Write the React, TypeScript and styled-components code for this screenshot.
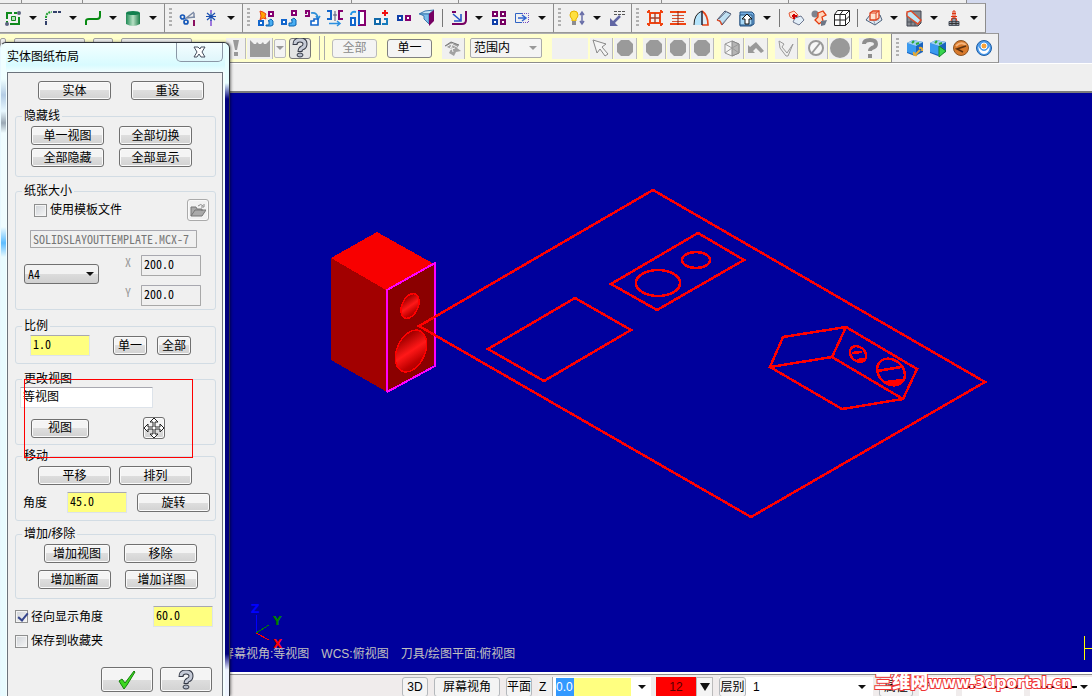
import * as React from 'react'
import styled, { createGlobalStyle, css } from 'styled-components'

const GlobalStyle = createGlobalStyle`
    * {
        box-sizing: border-box;
    }
    body {
        margin: 0;
        overflow: hidden;
        background: #f0f0f0;
    }
    body, button, input, select {
        font-family: 'Liberation Sans', 'Noto Sans CJK SC', sans-serif;
        font-size: 12px;
        line-height: 14px;
        color: #000;
    }
`

const glyphs = {
    grid: (
        <>
            <path d="M7 3H2v6M5 14h9V7" fill="none" stroke="#0f8a1c" strokeWidth="2" />
            <path d="M6.5 6.5h4v4h-4z" fill="#b7e0b7" stroke="#0f8a1c" />
            <path d="M9 3h3M2 11v2" stroke="#0f8a1c" strokeWidth="2" />
            <circle cx="14" cy="3" r="2" fill="#5c6480" />
            <circle cx="2" cy="14" r="2" fill="#5c6480" />
        </>
    ),
    fillet: (
        <>
            <path d="M1 15V9M8 2h8" stroke="#33416b" strokeWidth="2" strokeDasharray="4 1" />
            <path d="M1 8q0-6 6-6" fill="none" stroke="#20a030" strokeWidth="2" strokeDasharray="2 1" />
        </>
    ),
    spline: <path d="M1 15v-4q0-2 3-2h8q3 0 3-3V1" fill="none" stroke="#078a12" strokeWidth="2" />,
    cylinder: (
        <>
            <path d="M1 3v11q7 4 14 0V3z" fill="url(#cyl)" />
            <ellipse cx="8" cy="3" rx="7" ry="2" fill="#13804f" />
        </>
    ),
    trim: (
        <>
            <path d="M5 9l9-7M6 8l9-1" fill="none" stroke="#7a89a4" strokeWidth="1.5" />
            <path d="M14 3v5" stroke="#7a89a4" strokeWidth="1.5" />
            <path d="M14 10v6" stroke="#8a1060" strokeWidth="2" />
            <circle cx="2.5" cy="7" r="2" fill="none" stroke="#1457b8" strokeWidth="1.7" />
            <circle cx="6" cy="12" r="2" fill="none" stroke="#1457b8" strokeWidth="1.7" />
        </>
    ),
    breakPoint: (
        <>
            <path d="M8 0v3M8 10v6" stroke="#8a5ad8" strokeWidth="1.6" />
            <path d="M4 3l8 7M12 3l-8 7M3 6.5h10M8 3v8" stroke="#1c50b0" strokeWidth="1.2" />
        </>
    ),
    moveCopy: (
        <>
            <path d="M11 2h4v4h-4z" fill="#fff" stroke="#850070" strokeWidth="2" />
            <path d="M1 11h4v4H1z" fill="#fff" stroke="#1266cc" strokeWidth="2" />
            <path d="M2 1l3 1 3 2-1 2 1 3-3-1-3 2 1-4z" fill="#ffa500" stroke="#ee4010" />
            <path d="M8 15h3v-4h-1l3-2 2 2v4l-2 1H8z" fill="#49aef2" stroke="#0b62b0" />
        </>
    ),
    move: (
        <>
            <path d="M11 1h4v4h-4z" fill="#fff" stroke="#850070" strokeWidth="2" />
            <path d="M1 10h4v4H1z" fill="#fff" stroke="#1266cc" strokeWidth="2" />
            <path d="M8 13h3v-3h-1l3-2 2 2v5l-2 1H8z" fill="#49aef2" stroke="#0b62b0" />
        </>
    ),
    rotate: (
        <>
            <path d="M1 1h4v5H1M1 3h2" fill="none" stroke="#850070" strokeWidth="2" />
            <path d="M7 3q6-1 7 5M12 6l2 3 2-3" fill="none" stroke="#2d8fd8" strokeWidth="1.6" />
            <path d="M7 15v-4h3v-2h4v6z" fill="#fff" stroke="#1266cc" strokeWidth="1.6" />
        </>
    ),
    mirror: (
        <>
            <path d="M0 1h4v8H0" fill="none" stroke="#1266cc" strokeWidth="2" />
            <path d="M16 1h-4v8h4" fill="none" stroke="#850070" strokeWidth="2" />
            <path d="M8 1v10M6 5h4" stroke="#557" />
            <path d="M2 13.5h10M10 11l3 2.5-3 2.5" fill="none" stroke="#2b8fe0" strokeWidth="1.5" />
        </>
    ),
    scale: (
        <>
            <path d="M1 8h4v7H1z" fill="#fff" stroke="#1266cc" strokeWidth="2" />
            <path d="M9 1h6v14H9z" fill="#fff" stroke="#850070" strokeWidth="2" />
            <path d="M9 1v14" stroke="#1266cc" strokeWidth="2" />
            <path d="M1 5q0-4 5-3" fill="none" stroke="#2496e8" strokeWidth="2" />
        </>
    ),
    translate: (
        <>
            <path d="M2 9h5v5H2z" fill="#fff" stroke="#126aaa" strokeWidth="2" />
            <path d="M9 14h5v-5h-3" fill="none" stroke="#167bbd" strokeWidth="2" />
            <path d="M12 0v6M9 3h6" stroke="#f01010" strokeWidth="2" />
        </>
    ),
    pair: (
        <>
            <path d="M2 6h4v4H2z" fill="#fff" stroke="#103fa8" strokeWidth="2" />
            <path d="M10 6h4v4h-4z" fill="#fff" stroke="#850070" strokeWidth="2" />
        </>
    ),
    project: (
        <>
            <path d="M0 4h10l5-4-9 1z" fill="#c5e2f6" stroke="#3978b0" />
            <path d="M1 4h9v10L5 9V6z" fill="#7cbcec" stroke="#3978b0" />
            <path d="M10 4l5-4v11l-5 5z" fill="#760062" />
        </>
    ),
    roll: (
        <>
            <path d="M1 2h4M1 14h10q4 0 4-4V1" fill="none" stroke="#760062" strokeWidth="2" />
            <path d="M2 4l7 6M10 4v7H3" fill="none" stroke="#2454c8" strokeWidth="1.6" />
        </>
    ),
    array: (
        <>
            <path d="M2 2h4v4H2zM10 2h4v4h-4z" fill="#fff" stroke="#760062" strokeWidth="2" />
            <path d="M2 10h4v4H2z" fill="#fff" stroke="#103fa8" strokeWidth="2" />
            <path d="M10 10h4v4h-4z" fill="#fff" stroke="#760062" strokeWidth="2" />
        </>
    ),
    stretch: (
        <>
            <path d="M8 3.5H1.5v9H8" fill="none" stroke="#2e63c4" />
            <path d="M8 3.5h6.5v9H8" fill="none" stroke="#704ac0" strokeDasharray="1 1" />
            <path d="M4 8h7M8 5l4 3-4 3" fill="none" stroke="#3264d0" strokeWidth="1.5" />
        </>
    ),
    bulb: (
        <>
            <path d="M1 5q0-4 4-4t4 4q0 2-2 4v2H3V9Q1 7 1 5z" fill="#ffe040" stroke="#e4b000" />
            <path d="M3 11h4v4H3z" fill="#8c8c90" />
            <path d="M13 2v12M11 5l2-3 2 3M11 11l2 3 2-3" fill="none" stroke="#6a6fa8" strokeWidth="1.5" />
        </>
    ),
    dimension: (
        <>
            <path d="M5 1.5h11M5 4.5h11" stroke="#555" strokeDasharray="3 1" />
            <path d="M11 6l-7 7" fill="none" stroke="#6166a4" strokeWidth="2.5" />
            <path d="M1 8v8h8z" fill="#6166a4" />
        </>
    ),
    netSurface: (
        <>
            <path d="M3 3h10v10H3zM0 2h3M13 2h3M0 14h3M13 14h3" fill="none" stroke="#f04412" strokeWidth="2" />
            <path d="M2 0v3M14 0v3M2 13v3M14 13v3" stroke="#f04412" strokeWidth="2" />
            <path d="M8 3v10M3 8h10" stroke="#a84028" strokeWidth="1.4" />
        </>
    ),
    ruled: (
        <>
            <path d="M0 2h16M0 14h16" stroke="#f04412" strokeWidth="2" />
            <path d="M2 5.5h12M2 8.5h12M2 11.5h12" stroke="#d85030" />
            <path d="M8 1v14" stroke="#8b2510" />
        </>
    ),
    revolve: (
        <>
            <path d="M1 15Q1 4 9 1v14z" fill="#b5e4fb" />
            <path d="M1 15Q1 4 9 1" fill="none" stroke="#222" />
            <path d="M9 1q6 4 6 14H9z" fill="#dfeef8" />
            <path d="M9 1q6 4 6 14H9" fill="none" stroke="#e84518" strokeWidth="1.7" />
            <path d="M9 1v14" stroke="#223" strokeWidth="1.5" />
        </>
    ),
    sweep: (
        <>
            <path d="M1 10l8-9 6 3-9 11-2-4z" fill="#bfe0f2" stroke="#3c4660" />
            <path d="M3 9l8-8M6 14l9-10" fill="none" stroke="#7d889c" />
            <path d="M1 10l3 1 2 4" fill="none" stroke="#e0502d" strokeWidth="1.5" />
        </>
    ),
    extrude: (
        <>
            <path d="M1 2h12l2 2v10l-3 2H1z" fill="#73acdf" stroke="#225080" />
            <path d="M1 5h12v10H1z" fill="#a8d8f6" stroke="#225080" />
            <path d="M6 14V9H3l5-5 5 5h-3v5z" fill="#fff" stroke="#111" />
        </>
    ),
    flower: (
        <>
            <path d="M1 3l5-2 4 4-2 5-6-3z" fill="#ffe3d0" stroke="#e35a38" />
            <path d="M7 8l6-2 3 4-5 5-6-3z" fill="#e2eef8" stroke="#6c768e" />
            <path d="M6 4v5M4 6h5" stroke="#d00000" strokeWidth="2" />
        </>
    ),
    surfaceTrim: (
        <>
            <circle cx="4" cy="4" r="3.5" fill="#7c838e" />
            <path d="M7 3l5-2 3 4-4 2 1 4-4 3-4-4 3-3z" fill="#ffd6bd" stroke="#e33c10" strokeWidth="1.3" />
            <path d="M10 11l6-1-2 5-4 1z" fill="#6c7686" />
        </>
    ),
    wireCube: (
        <path
            d="M.5 4.5h11v11H.5zM.5 4.5l3-4h12v11l-4 4M11.5 4.5l4-4M6 4.5v11M.5 10h11l4-4M9 .5l-3 4"
            fill="#fff"
            stroke="#222"
            strokeLinejoin="round"
        />
    ),
    planar: (
        <>
            <path d="M0 10l4-5h10l2 5-7 5z" fill="#dfe9f2" stroke="#4d617a" />
            <path d="M4 10h9M6 6l3 8" stroke="#8fa0b3" />
            <path d="M4 3l3-2h6v7l-3 2H4z" fill="#ffe1cf" stroke="#df401c" strokeWidth="1.3" />
            <path d="M4 3h6v7M10 3l3-2" fill="none" stroke="#df401c" />
        </>
    ),
    surfaceBox: (
        <>
            <path d="M1 3l3-2h11v12l-3 3H1z" fill="#85898f" stroke="#404550" />
            <path d="M1 12h11M5 8v8M9 8v8" stroke="#4c505a" />
            <path d="M1 2l4-1 10 9-3 4L1 6z" fill="#bfe6f5" stroke="#e04824" strokeWidth="1.4" />
        </>
    ),
    tower: (
        <>
            <path d="M3 11.5h10v4H3zM6 8.5h4v3H6z" fill="#939aa5" stroke="#4b525e" />
            <path d="M7 1h2v7H7zM6 3.5h4M5 6.5h6M6 8l-1 3M10 8l1 3" fill="none" stroke="#df3510" />
            <path d="M3 13.5h10M6 11v4M10 11v4" stroke="#333" />
        </>
    ),
    bang: <path d="M5 0h6l-1 5-1 5H7L6 5zM6 12h4v4H6z" fill="#999" />,
    envelope: (
        <path d="M-2 0l4 4h2l1-2 2 2h2l2-2 1 2h2l4-4v17H-2z" fill="#9b9b9b" />
    ),
    leaf: (
        <>
            <path d="M0 6l6-4 8 3-2 3 4 3-5 1-2 4-5-3 2-4z" fill="#a2a2a2" />
            <path d="M1 7l5-3 6 3M6 4l2 8M4 10l6-2M9 2l-5 8" fill="none" stroke="#f2f2f2" />
            <path d="M0 6l6-4 8 3" fill="none" stroke="#777" />
        </>
    ),
    pointer: <path d="M0 0l13 4-4 3 6 7-3 2-5-7-3 4z" fill="#f4f4f4" stroke="#888" />,
    hex: <path d="M4 0h8l4 4v8l-4 4H4l-4-4V4z" fill="#9a9a9a" />,
    isoCube: (
        <>
            <path d="M1 4l7-3 7 3v9l-7 3-7-3z" fill="#f4f4f4" stroke="#999" />
            <path d="M8 1l7 3v9l-7 3z" fill="#b4b4b4" stroke="#888" />
            <path d="M8 8l7-4M8 8l-7 5M8 8l7 5M8 8L1 4" fill="none" stroke="#999" />
        </>
    ),
    undo: <path d="M0 13V5l2 2 6-5 8 9-3 2-5-5-3 3 2 2z" fill="#999" />,
    check: <path d="M1 1l5 3-2 3 5 6 6-9-5 12H8L2 8z" fill="#eee" stroke="#999" />,
    noEntry: (
        <>
            <circle cx="8" cy="8" r="7" fill="#f7f7f7" stroke="#999" strokeWidth="2" />
            <path d="M4 13l8-10" stroke="#999" strokeWidth="2" />
        </>
    ),
    disc: <circle cx="8" cy="8" r="10" fill="#999" />,
    question: (
        <>
            <path d="M2 4q0-4 6-4t6 4q0 3-4 4-2 1-2 3" fill="none" stroke="#8e8e8e" strokeWidth="4" />
            <path d="M6 14h4v4H6z" fill="#8e8e8e" />
        </>
    ),
    machine: (
        <>
            <path d="M0 3l6-3 10 2v10l-8 4-8-3z" fill="#1a63bf" />
            <path d="M0 3l9 3v9l-9-3z" fill="#3a9af0" />
            <path d="M0 3l6-3 10 2-7 4z" fill="#9fd0f2" />
            <path d="M5 3l2-2M9 4l3-1" stroke="#28a838" strokeWidth="2" />
            <path d="M8 15l5-5M12 8q4-1 3 3M7 12q-1 4 3 3" fill="none" stroke="#e8ab35" strokeWidth="2" />
        </>
    ),
    play: (
        <>
            <path d="M0 3l6-3 10 2v10l-8 4-8-3z" fill="#1a63bf" />
            <path d="M0 3l9 3v9l-9-3z" fill="#3a9af0" />
            <path d="M0 3l6-3 10 2-7 4z" fill="#9fd0f2" />
            <path d="M5 3l2-2M9 4l3-1" stroke="#28a838" strokeWidth="2" />
            <path d="M9 6l7 5-7 6z" fill="#38d54e" stroke="#168628" />
        </>
    ),
    back: (
        <>
            <circle cx="8" cy="8" r="7.5" fill="#d87a2c" stroke="#8a5424" />
            <path d="M3 6q5-5 10-1" fill="none" stroke="#f5b47c" strokeWidth="2" />
            <path d="M13 6L4 9l6 3" fill="none" stroke="#5d3210" strokeWidth="1.6" />
        </>
    ),
    globe: (
        <>
            <circle cx="8" cy="8" r="7.5" fill="#4c9cec" stroke="#1d5ca4" />
            <path d="M2 6q6 10 12 0-1 8-6 8T2 6z" fill="#fff" />
            <circle cx="8" cy="6" r="3" fill="#f7a33a" stroke="#fff" />
        </>
    ),
}

type GlyphName = keyof typeof glyphs

// 'v' = drop-down arrow, '|' = separator
type Item = GlyphName | 'v' | '|'

const toolGroups: Item[][] = [
    ['grid', 'v', 'fillet', 'v', 'spline', 'v', 'cylinder', 'v'],
    ['trim', 'breakPoint', 'v'],
    [
        'moveCopy', 'move', 'rotate', 'mirror', 'scale', 'translate', 'pair', 'project', '|',
        'roll', 'v', 'array', 'stretch', 'v',
    ],
    ['bulb', 'v', 'dimension'],
    [
        'netSurface', 'ruled', 'revolve', 'sweep', 'extrude', 'v', '|',
        'flower', 'surfaceTrim', 'wireCube', '|',
        'planar', 'v', 'surfaceBox', 'v', 'tower', 'v',
    ],
]

const Glyph = ({ name }: { name: GlyphName }) => (
    <GlyphSvg viewBox="0 0 16 16" width="16" height="16" aria-hidden="true">
        {glyphs[name]}
    </GlyphSvg>
)

const Tool = ({ item }: { item: Item }) => {
    if (item === '|') return <Separator />
    if (item === 'v') {
        return (
            <ArrowButton aria-label="more">
                <Caret />
            </ArrowButton>
        )
    }
    return (
        <ToolButton aria-label={item}>
            <Glyph name={item} />
        </ToolButton>
    )
}

const HelpMark = () => (
    <svg width="18" height="20" viewBox="0 0 18 20" aria-hidden="true">
        <path d="M4 7q0-5 5-5t5 4q0 3-3 4-2 1-2 4" fill="none" stroke="#333845" strokeWidth="5" />
        <path d="M4 6q0-4 5-4t5 4q0 3-3 4-2 1-2 3" fill="none" stroke="#c5cad6" strokeWidth="3" />
        <ellipse cx="9" cy="17" rx="3" ry="2" fill="#b6bcc9" stroke="#333845" />
    </svg>
)

const Toolbars = () => (
    <ToolArea>
        <TopStrip>
            {[22, 61, 269, 107, 203, 127, 178].map((width) => (
                <TopCell key={width} $width={width} />
            ))}
        </TopStrip>
        <ToolRow>
            {toolGroups.map((group, index) => (
                <ToolGroup key={index}>
                    {index > 0 && <Grip />}
                    {group.map((item, i) => (
                        <Tool key={i} item={item} />
                    ))}
                </ToolGroup>
            ))}
        </ToolRow>
        <ToolRow>
            <SelectionBar>
                <Ghosts>
                    <Ghost $width={6} />
                    <Ghost $width={71} />
                    <Ghost $width={20} />
                    <Ghost $width={71} />
                </Ghosts>
                <MaskButton $width={20} aria-label="alert">
                    <Glyph name="bang" />
                </MaskButton>
                <MaskButton $width={26} aria-label="mask">
                    <Glyph name="envelope" />
                </MaskButton>
                <BoxArrow aria-label="mask options">
                    <Caret $muted />
                </BoxArrow>
                <BarHelp aria-label="help">
                    <HelpMark />
                </BarHelp>
                <BarSplit />
                <BarButton $muted>全部</BarButton>
                <BarButton>单一</BarButton>
                <MaskButton $width={23} aria-label="surfaces">
                    <Glyph name="leaf" />
                </MaskButton>
                <RangeWrap>
                    <RangeSelect aria-label="范围">
                        <option>范围内</option>
                    </RangeSelect>
                    <Caret $muted />
                </RangeWrap>
                <EmptyTool />
                <MaskButton $width={23} aria-label="pointer">
                    <Glyph name="pointer" />
                </MaskButton>
                <MaskButton $width={23} $after={6} aria-label="solid">
                    <Glyph name="hex" />
                </MaskButton>
                <MaskButton $width={23} aria-label="face">
                    <Glyph name="hex" />
                </MaskButton>
                <MaskButton $width={23} aria-label="body">
                    <Glyph name="hex" />
                </MaskButton>
                <MaskButton $width={23} $after={7} aria-label="edge">
                    <Glyph name="hex" />
                </MaskButton>
                <MaskButton $width={23} aria-label="back face">
                    <Glyph name="isoCube" />
                </MaskButton>
                <MaskButton $width={23} $after={7} aria-label="last">
                    <Glyph name="undo" />
                </MaskButton>
                <MaskButton $width={23} $after={7} aria-label="verify">
                    <Glyph name="check" />
                </MaskButton>
                <MaskButton $width={23} aria-label="cancel">
                    <Glyph name="noEntry" />
                </MaskButton>
                <MaskButton $width={23} $after={7} aria-label="end">
                    <Glyph name="disc" />
                </MaskButton>
                <MaskButton $width={23} aria-label="selection help">
                    <Glyph name="question" />
                </MaskButton>
            </SelectionBar>
            <ToolGroup>
                <Grip />
                {(['machine', 'play', 'back', 'globe'] as GlyphName[]).map((name) => (
                    <ToolButton key={name} aria-label={name}>
                        <Glyph name={name} />
                    </ToolButton>
                ))}
            </ToolGroup>
        </ToolRow>
        <PromptStrip />
    </ToolArea>
)

const Scene = () => (
    <SceneSvg viewBox="0 93 1092 579" preserveAspectRatio="xMinYMin meet" role="img" aria-label="drawing">
        <defs>
            <linearGradient id="hole" x1="0" y1="0" x2="1" y2="1">
                <stop offset="0" stopColor="#8b0000" />
                <stop offset="0.2" stopColor="#a80000" />
                <stop offset="0.5" stopColor="#ff1818" />
                <stop offset="0.75" stopColor="#c00000" />
                <stop offset="1" stopColor="#900000" />
            </linearGradient>
            <linearGradient id="cyl">
                <stop offset="0" stopColor="#1f8a55" />
                <stop offset="0.5" stopColor="#b7e0c4" />
                <stop offset="1" stopColor="#1b7a48" />
            </linearGradient>
        </defs>
        <g shapeRendering="crispEdges">
            <path d="M377 232l57 32-48 26-55-32z" fill="#f80000" />
            <path d="M331 258l55 32 1 102-56-32z" fill="#a20000" />
            <path d="M386 290l48-26v101l-47 27z" fill="#8b0000" />
            <path d="M387 392V290l48-27v103l-48 26" fill="none" stroke="#f0f" strokeWidth="2" />
            <g fill="url(#hole)" stroke="red" strokeWidth="1.5">
                <ellipse cx="410" cy="306" rx="8" ry="13" transform="rotate(24 410 306)" />
                <ellipse cx="411" cy="351" rx="14" ry="22" transform="rotate(24 411 351)" />
            </g>
            <g fill="none" stroke="red" strokeWidth="2.5">
                <path d="M653 190l332 192-234 135-332-191z" />
                <path d="M698 233l46 27-87 50-46-26z" />
                <path d="M575 298l56 32-87 51-56-32z" />
                <ellipse cx="658" cy="283" rx="22" ry="13" />
                <ellipse cx="696" cy="260" rx="14" ry="8" />
                <path d="M783 337l63-10 71 42-14 30-61 10-72-42zM770 367l62-10 14-30M832 357l71 42" />
                <ellipse cx="858" cy="354" rx="9" ry="7" transform="rotate(40 858 354)" />
                <ellipse cx="891" cy="372" rx="15" ry="12" transform="rotate(40 891 372)" />
                <path d="M852 353l10-1M857 360l9-1M877 371l24-4M886 382l17-2M889 384l12-1" />
            </g>
            <path d="M256 615v18" stroke="#00f" />
            <path d="M256 633l13-8" stroke="#008000" />
            <path d="M256 633l13 7" stroke="red" />
            <path d="M1084 636v24M1084 648h8" stroke="#ff0" />
        </g>
        <AxisText x="251" y="613" fill="#00f">
            Z
        </AxisText>
        <AxisText x="273" y="625" fill="#008000">
            Y
        </AxisText>
        <AxisText x="273" y="648" fill="red">
            X
        </AxisText>
    </SceneSvg>
)

const LayoutDialog = () => (
    <DialogStyled role="dialog" aria-label="实体图纸布局">
        <TitleBar>
            <Title>实体图纸布局</Title>
            <CloseButton aria-label="关闭">
                <svg width="13" height="12" viewBox="0 0 13 12" aria-hidden="true">
                    <path d="M1 1h4l2 2 1-2h4L9 6l3 5H8L6 8l-2 3H1l3-5z" fill="#fff" stroke="#454e5e" />
                </svg>
            </CloseButton>
        </TitleBar>
        <Client>
            <Row $indent={30} $gap={20}>
                <Button>实体</Button>
                <Button>重设</Button>
            </Row>

            <Group $top={9} $bottom={9}>
                <Legend>隐藏线</Legend>
                <Row $top={3} $indent={15} $gap={15}>
                    <Button>单一视图</Button>
                    <Button>全部切换</Button>
                </Row>
                <Row $top={3} $indent={15} $gap={15}>
                    <Button>全部隐藏</Button>
                    <Button>全部显示</Button>
                </Row>
            </Group>

            <Group $top={7} $bottom={3}>
                <Legend>纸张大小</Legend>
                <Row $top={1} $indent={18} $end={6}>
                    <CheckLabel>
                        <CheckBox type="checkbox" />
                        使用模板文件
                    </CheckLabel>
                    <IconButton disabled aria-label="打开">
                        <svg width="16" height="14" viewBox="0 0 16 14" aria-hidden="true">
                            <path d="M1 13V4h5l1 2h5v2M1 13l4-6h11l-4 6z" fill="#aaa" stroke="#777" />
                            <path d="M8 3q3-3 5 0M14 1v3h-3" fill="none" stroke="#888" />
                        </svg>
                    </IconButton>
                </Row>
                <Row $top={9} $indent={14}>
                    <TextBox $width={167} $tone="off" disabled aria-label="模板文件" defaultValue="SOLIDSLAYOUTTEMPLATE.MCX-7" />
                </Row>
                <PaperRow>
                    <PaperWrap>
                        <PaperSelect aria-label="纸张大小">
                            <option>A4</option>
                        </PaperSelect>
                        <Caret />
                    </PaperWrap>
                    <SizeFields>
                        <SizeLabel>
                            X
                            <TextBox $width={60} $tone="off" $dark readOnly defaultValue="200.0" />
                        </SizeLabel>
                        <SizeLabel>
                            Y
                            <TextBox $width={60} $tone="off" $dark readOnly defaultValue="200.0" />
                        </SizeLabel>
                    </SizeFields>
                </PaperRow>
            </Group>

            <Group $top={9} $bottom={7}>
                <Legend>比例</Legend>
                <Row $top={2} $indent={14} $gap={10}>
                    <TextBox $width={60} $after={13} $tone="yellow" aria-label="比例" defaultValue="1.0" />
                    <Button $width={34}>单一</Button>
                    <Button $width={34}>全部</Button>
                </Row>
            </Group>

            <Group $top={8} $bottom={5}>
                <Legend>更改视图</Legend>
                <Row $top={1} $indent={4}>
                    <TextBox $width={133} aria-label="更改视图" defaultValue="等视图" />
                </Row>
                <Row $top={9} $indent={15} $gap={54}>
                    <Button $width={58}>视图</Button>
                    <IconButton aria-label="移动视图">
                        <svg width="20" height="20" viewBox="0 0 20 20" aria-hidden="true">
                            <path
                                d="M10 0l4 4h-3v5h5V6l4 4-4 4v-3h-5v5h3l-4 4-4-4h3v-5H4v3l-4-4 4-4v3h5V4H6z"
                                fill="#fff"
                                stroke="#222"
                            />
                        </svg>
                    </IconButton>
                </Row>
                <Marker />
            </Group>

            <Group $top={4} $bottom={7}>
                <Legend>移动</Legend>
                <Row $top={3} $indent={22} $gap={8}>
                    <Button>平移</Button>
                    <Button>排列</Button>
                </Row>
                <Row $top={7} $indent={7} $gap={10}>
                    <FieldLabel>
                        角度
                        <TextBox $width={60} $tone="yellow" defaultValue="45.0" />
                    </FieldLabel>
                    <Button>旋转</Button>
                </Row>
            </Group>

            <Group $top={6} $bottom={9}>
                <Legend>增加/移除</Legend>
                <Row $top={3} $indent={28} $gap={14}>
                    <Button $width={66}>增加视图</Button>
                    <Button>移除</Button>
                </Row>
                <Row $top={7} $indent={22} $gap={14}>
                    <Button>增加断面</Button>
                    <Button>增加详图</Button>
                </Row>
            </Group>

            <Row $top={7} $indent={7} $end={3}>
                <CheckLabel>
                    <CheckBox type="checkbox" defaultChecked />
                    径向显示角度
                </CheckLabel>
                <TextBox $width={60} $tone="yellow" aria-label="角度值" defaultValue="60.0" />
            </Row>
            <Row $top={7} $indent={7}>
                <CheckLabel>
                    <CheckBox type="checkbox" />
                    保存到收藏夹
                </CheckLabel>
            </Row>
            <Footer>
                <BigButton aria-label="确定">
                    <svg width="20" height="20" viewBox="0 0 20 20" aria-hidden="true">
                        <path d="M2 11l3-2 3 4L17 1l1 1-8 13-3 4z" fill="#3cd820" stroke="#15800c" />
                    </svg>
                </BigButton>
                <BigButton aria-label="帮助">
                    <HelpMark />
                </BigButton>
            </Footer>
        </Client>
    </DialogStyled>
)

const StatusBar = () => (
    <StatusStyled>
        <StatusButton $width={26}>3D</StatusButton>
        <StatusButton $width={66}>屏幕视角</StatusButton>
        <StatusButton $width={26}>平面</StatusButton>
        <StatusField>
            <ZLabel>Z</ZLabel>
            <DepthBox aria-label="Z" defaultValue="0.0" />
            <Caret />
        </StatusField>
        <ColorField>
            <ColorButton>12</ColorButton>
            <ColorArrow aria-label="颜色">
                <Caret $big />
            </ColorArrow>
        </ColorField>
        <LevelField>
            <StatusButton $width={27}>层别</StatusButton>
            <LevelBox aria-label="层别" defaultValue="1" />
            <Caret />
        </LevelField>
        <StatusButton $width={34}>属性</StatusButton>
        <StylePicker $width={37} aria-label="点型">
            <Star>*</Star>
            <Caret />
        </StylePicker>
        <StylePicker $width={62} aria-label="线型">
            <LineSample />
            <Caret />
        </StylePicker>
        <StylePicker $width={62} aria-label="线宽">
            <LineSample />
            <Caret />
        </StylePicker>
        <Watermark>
            <b>三维网</b>www.3dportal.cn
        </Watermark>
    </StatusStyled>
)

export default function App() {
    return (
        <Page>
            <GlobalStyle />
            <Toolbars />
            <Viewport>
                <Scene />
                <ViewInfo>
                    <span>屏幕视角:等视图</span>
                    <span>WCS:俯视图</span>
                    <span>刀具/绘图平面:俯视图</span>
                </ViewInfo>
            </Viewport>
            <StatusBar />
            <LayoutDialog />
        </Page>
    )
}

const Page = styled.div`
    display: flex;
    flex-direction: column;
    height: 100vh;
    overflow: hidden;
    position: relative;
`

/* toolbars */

const ToolArea = styled.header`
    display: flex;
    flex-direction: column;
    background: #d3d9ee;
`

const TopStrip = styled.div`
    display: flex;
    height: 3px;
`

const TopCell = styled.div<{ $width: number }>`
    width: ${({ $width }) => $width}px;
    background: #efefef;
    border-right: 1px solid #8c8c8c;
`

const ToolRow = styled.div`
    display: flex;
    height: 30px;
`

const ToolGroup = styled.div`
    display: flex;
    align-items: center;
    padding: 0 3px 0 1px;
    background: #f0f0f0;
    border-top: 1px solid #999;
    border-right: 1px solid #8c8c8c;
    border-bottom: 1px solid #999;
`

const Grip = styled.div`
    width: 3px;
    height: 20px;
    margin: 0 4px 0 3px;
    background: repeating-linear-gradient(#b0b0b0 0 2px, #f0f0f0 2px 4px);
`

const Separator = styled.div`
    width: 1px;
    height: 18px;
    margin: 0 4px;
    background: #777;
`

const bareButton = css`
    display: flex;
    flex: none;
    align-items: center;
    justify-content: center;
    padding: 0;
    border: 0;
    background: none;
`

const ToolButton = styled.button`
    ${bareButton}
    width: 23px;
    height: 24px;
`

const ArrowButton = styled.button`
    ${bareButton}
    width: 17px;
    height: 24px;
`

const GlyphSvg = styled.svg`
    display: block;
    flex: none;
    overflow: visible;
`

const Caret = styled.i<{ $muted?: boolean; $big?: boolean }>`
    flex: none;
    width: 0;
    height: 0;
    border: ${({ $big }) => ($big ? 5 : 4)}px solid transparent;
    border-top-color: ${({ $muted }) => ($muted ? '#999' : '#111')};
    border-top-width: ${({ $big }) => ($big ? 8 : 4)}px;
    border-bottom: 0;
    pointer-events: none;
`

const SelectionBar = styled.div`
    display: flex;
    align-items: center;
    width: 892px;
    background: #ffffcc;
    border-top: 1px solid #b0b0b0;
    border-right: 1px solid #8c8c8c;
    border-bottom: 1px solid #8c8c8c;
`

const Ghosts = styled.div`
    display: flex;
    flex: none;
    gap: 8px;
    width: 226px;
`

const Ghost = styled.div<{ $width: number }>`
    width: ${({ $width }) => $width}px;
    height: 20px;
    border: 1px solid #a0a0a0;
    border-radius: 2px;
    background: #efefef;
`

const MaskButton = styled.button<{ $width: number; $after?: number }>`
    ${bareButton}
    width: ${({ $width }) => $width}px;
    height: 21px;
    margin-right: ${({ $after = 1 }) => $after}px;
    background: #f0f0f0;
    border-right: 1px solid #bbb;
    overflow: hidden;
`

const BoxArrow = styled.button`
    ${bareButton}
    width: 12px;
    height: 19px;
    border: 1px solid #bbb;
    border-radius: 2px;
    background: #f4f4f4;
`

const BarHelp = styled.button`
    ${bareButton}
    width: 22px;
    height: 21px;
    margin: 0 8px 0 3px;
    border: 1px solid #777;
    border-radius: 3px;
    background: #e4e4e4;
`

const BarSplit = styled.div`
    width: 6px;
    height: 24px;
    margin-right: 7px;
    border: 1px solid #aaa;
    border-width: 0 1px;
`

const BarButton = styled.button<{ $muted?: boolean }>`
    ${bareButton}
    width: 45px;
    height: 19px;
    margin-right: 10px;
    border: 1px solid ${({ $muted }) => ($muted ? '#bbb' : '#808080')};
    border-radius: 3px;
    background: #f4f4f4;
    color: ${({ $muted }) => ($muted ? '#8a8a8a' : '#000')};
`

const RangeWrap = styled.div`
    display: flex;
    align-items: center;
    width: 72px;
    height: 20px;
    margin: 0 10px 0 4px;
    padding-right: 4px;
    border: 1px solid #aaa;
    border-radius: 2px;
    background: #f4f4f4;
`

const RangeSelect = styled.select`
    flex: 1;
    min-width: 0;
    padding: 0 3px;
    appearance: none;
    border: 0;
    background: none;
`

const EmptyTool = styled.div`
    width: 36px;
    height: 21px;
    margin-right: 2px;
    background: #f0f0f0;
`

const PromptStrip = styled.div`
    height: 30px;
    background: #efefef;
    border-top: 1px solid #fff;
    border-bottom: 2px solid #7c7c7c;
`

/* drawing area */

const Viewport = styled.main`
    display: flex;
    flex: 1;
    flex-direction: column;
    justify-content: flex-end;
    min-height: 0;
    position: relative;
    background: #00009c;
`

const SceneSvg = styled.svg`
    position: absolute;
    left: 0;
    top: 0;
    width: 100%;
    height: 100%;
`

const AxisText = styled.text`
    font: bold 12px 'DejaVu Sans', sans-serif;
`

const ViewInfo = styled.div`
    display: flex;
    gap: 12px;
    padding: 0 0 11px 222px;
    color: #c0c0c0;
    white-space: nowrap;
`

/* dialog */

const DialogStyled = styled.section`
    position: absolute;
    left: 0;
    top: 42px;
    bottom: 0;
    width: 230px;
    padding: 0 6px;
    overflow: hidden;
    border: 1px solid #30343c;
    border-left-color: #e8f8ff;
    border-bottom: 0;
    border-radius: 6px 6px 0 0;
    background:
        linear-gradient(#e8ffff 40px, #00007c 56px, #00007c calc(100% - 42px), #eef4ff calc(100% - 26px)) right /
            4px 100% no-repeat,
        linear-gradient(
                #f0ffff 36px,
                #b4cce4 52px,
                #e8f8ff 68px,
                #9aa8b4 80px,
                #effcff 90px,
                #effcff 184px,
                #5cbcff 200px,
                #e8fbff 214px
            )
            left / 5px 100% no-repeat,
        linear-gradient(#f4ffff, #d8fbff 22px, #f4ffff 30px);
    box-shadow: 1px 0 3px rgba(0, 0, 0, 0.5);
`

const TitleBar = styled.div`
    display: flex;
    align-items: flex-start;
    justify-content: space-between;
    height: 29px;
`

const Title = styled.span`
    padding-top: 7px;
`

const CloseButton = styled.button`
    ${bareButton}
    width: 47px;
    height: 19px;
    border: 1px solid #8a97a6;
    border-top: 0;
    border-radius: 0 0 5px 5px;
    background: linear-gradient(#f4fdff, #dff6fb);
`

const Client = styled.div`
    height: 100%;
    padding: 8px 6px 0 0;
    border: 1px solid #6c737c;
    background: #f0f0f0;
`

const Row = styled.div<{ $top?: number; $indent: number; $gap?: number; $end?: number }>`
    display: flex;
    align-items: center;
    justify-content: ${({ $end }) => ($end ? 'space-between' : 'flex-start')};
    gap: ${({ $gap = 0 }) => $gap}px;
    margin-top: ${({ $top = 0 }) => $top}px;
    padding-left: ${({ $indent }) => $indent}px;
    padding-right: ${({ $end = 0 }) => $end}px;
`

const PaperRow = styled.div`
    display: flex;
    gap: 26px;
    margin-top: 7px;
    padding-left: 8px;
`

const Group = styled.fieldset<{ $top: number; $bottom: number }>`
    min-width: 0;
    margin: ${({ $top }) => $top}px 0 0 7px;
    padding: 0 0 ${({ $bottom }) => $bottom}px;
    position: relative;
    border: 1px solid #d2dce4;
    border-radius: 3px;
`

const Legend = styled.legend`
    height: 14px;
    margin-left: 6px;
    padding: 0 2px;
`

const Button = styled.button<{ $width?: number }>`
    ${bareButton}
    width: ${({ $width = 73 }) => $width}px;
    height: 19px;
    border: 1px solid #707070;
    border-radius: 3px;
    background: linear-gradient(#f4f4f4 50%, #dedede 50%, #d2d2d2);
    box-shadow: inset 0 0 0 1px #fafafa;
    white-space: nowrap;
`

const IconButton = styled(Button)`
    width: 22px;
    height: 22px;

    &:disabled {
        border-color: #aaa;
        background: #f2f2f2;
    }
`

const BigButton = styled(Button)`
    width: 52px;
    height: 25px;
`

const tones = {
    white: '#fff',
    yellow: '#ffff80',
    off: '#f0f0f0',
}

interface TextBoxProps {
    $width: number
    $tone?: keyof typeof tones
    $dark?: boolean
    $after?: number
}

const TextBox = styled.input<TextBoxProps>`
    width: ${({ $width }) => $width}px;
    height: ${({ disabled }) => (disabled ? 18 : 21)}px;
    margin-right: ${({ $after = 0 }) => $after}px;
    padding: 0 2px ${({ disabled }) => (disabled ? 2 : 4)}px;
    border: 1px solid ${({ $tone }) => ($tone === 'off' ? '#a8a8a8' : '#dde3ea')};
    border-top-color: #a8a8b0;
    border-radius: 1px;
    background: ${({ $tone = 'white' }) => tones[$tone]};
    color: ${({ $tone, $dark }) => ($tone === 'off' && !$dark ? '#777' : '#000')};
    font-family: 'Noto Sans CJK SC', sans-serif;
    font-feature-settings: 'hwid';
`

const CheckLabel = styled.label`
    display: flex;
    align-items: center;
    gap: 3px;
`

const CheckBox = styled.input`
    width: 13px;
    height: 13px;
    margin: 0;
    appearance: none;
    border: 1px solid #8e8f8f;
    background: linear-gradient(135deg, #cfd3d8, #f6f6f6);
    box-shadow: inset 0 0 0 1px #f4f4f4;

    &:checked::after {
        content: '';
        display: block;
        width: 4px;
        height: 8px;
        margin: 0 0 0 4px;
        border: solid #35458c;
        border-width: 0 2px 2px 0;
        transform: rotate(40deg);
    }
`

const PaperWrap = styled.div`
    display: flex;
    align-items: center;
    width: 75px;
    height: 20px;
    margin-top: 9px;
    padding-right: 4px;
    border: 1px solid #707070;
    border-radius: 3px;
    background: linear-gradient(#f2f2f2 50%, #dcdcdc 50%, #d0d0d0);
`

const PaperSelect = styled.select`
    flex: 1;
    min-width: 0;
    padding: 0 3px;
    appearance: none;
    border: 0;
    background: none;
    font-family: 'Noto Sans CJK SC', sans-serif;
    font-feature-settings: 'hwid';
`

const SizeFields = styled.div`
    display: flex;
    flex-direction: column;
    gap: 9px;
`

const SizeLabel = styled.label`
    display: flex;
    gap: 10px;
    color: #999;
    font-family: 'Noto Sans CJK SC', sans-serif;
    font-feature-settings: 'hwid';
`

const FieldLabel = styled.label`
    display: flex;
    align-items: center;
    gap: 20px;
`

const Footer = styled.div`
    display: flex;
    justify-content: flex-end;
    gap: 7px;
    margin-top: 19px;
    padding-right: 4px;
`

// selection frame drawn over the view group
const Marker = styled.div`
    position: absolute;
    left: 8px;
    top: -7px;
    z-index: 1;
    width: 169px;
    height: 79px;
    border: 1px solid red;
    pointer-events: none;
`

/* status bar */

const StatusStyled = styled.footer`
    display: flex;
    flex: none;
    align-items: flex-start;
    gap: 6px;
    height: 24px;
    padding: 3px 0 0 402px;
    position: relative;
    overflow: hidden;
    border-top: 2px solid #fff;
    background: #f0ecec;
    box-shadow: inset 0 1px 0 #8c8c8c;
`

const StatusButton = styled.button<{ $width: number }>`
    ${bareButton}
    width: ${({ $width }) => $width}px;
    height: 20px;
    border: 1px solid #b4b8bc;
    border-radius: 3px;
    background: #f4f4f4;
    white-space: nowrap;
`

const StatusField = styled.div`
    display: flex;
    align-items: center;
    width: 113px;
    height: 20px;
    padding-right: 5px;
    background: #fff;
`

const ZLabel = styled.span`
    width: 15px;
    align-self: stretch;
    padding: 3px 0 0 1px;
    background: #f0f0f0;
    border-right: 1px solid #aaa;
`

const DepthBox = styled.input`
    width: 78px;
    height: 18px;
    margin: 0 auto 0 3px;
    padding: 0;
    border: 0;
    background: linear-gradient(to right, #3399ff 18px, #ffff80 18px 75px, #fff 75px);
    color: #fff;
`

const ColorField = styled.div`
    display: flex;
    width: 57px;
    height: 20px;
    margin-left: -1px;
`

const ColorButton = styled.button`
    ${bareButton}
    width: 40px;
    background: #ff0000;
    color: #500;
`

const ColorArrow = styled.button`
    ${bareButton}
    flex: 1;
    background: #f4f4f4;
    border: 1px solid #bbb;
`

const LevelField = styled.div`
    display: flex;
    flex: 1;
    align-items: center;
    height: 20px;
    padding-right: 7px;
    background: #fff;
`

const LevelBox = styled.input`
    flex: 1;
    width: 0;
    min-width: 0;
    padding: 0 7px;
    border: 0;
    background: none;
`

const StylePicker = styled.button<{ $width: number }>`
    ${bareButton}
    justify-content: space-between;
    gap: 3px;
    width: ${({ $width }) => $width}px;
    height: 20px;
    padding: 0 4px;
    background: #fff;
`

const Star = styled.span`
    font-size: 18px;
    line-height: 20px;
`

const LineSample = styled.i`
    flex: 1;
    height: 2px;
    background: #000;
`

const Watermark = styled.span`
    position: absolute;
    right: 20px;
    top: -2px;
    font: bold 15px/20px 'DejaVu Sans', 'Noto Sans CJK SC', sans-serif;
    color: #fff;
    -webkit-text-stroke: 2px #ee3434;
    paint-order: stroke fill;
    white-space: nowrap;

    b {
        font-size: 18px;
    }
`
